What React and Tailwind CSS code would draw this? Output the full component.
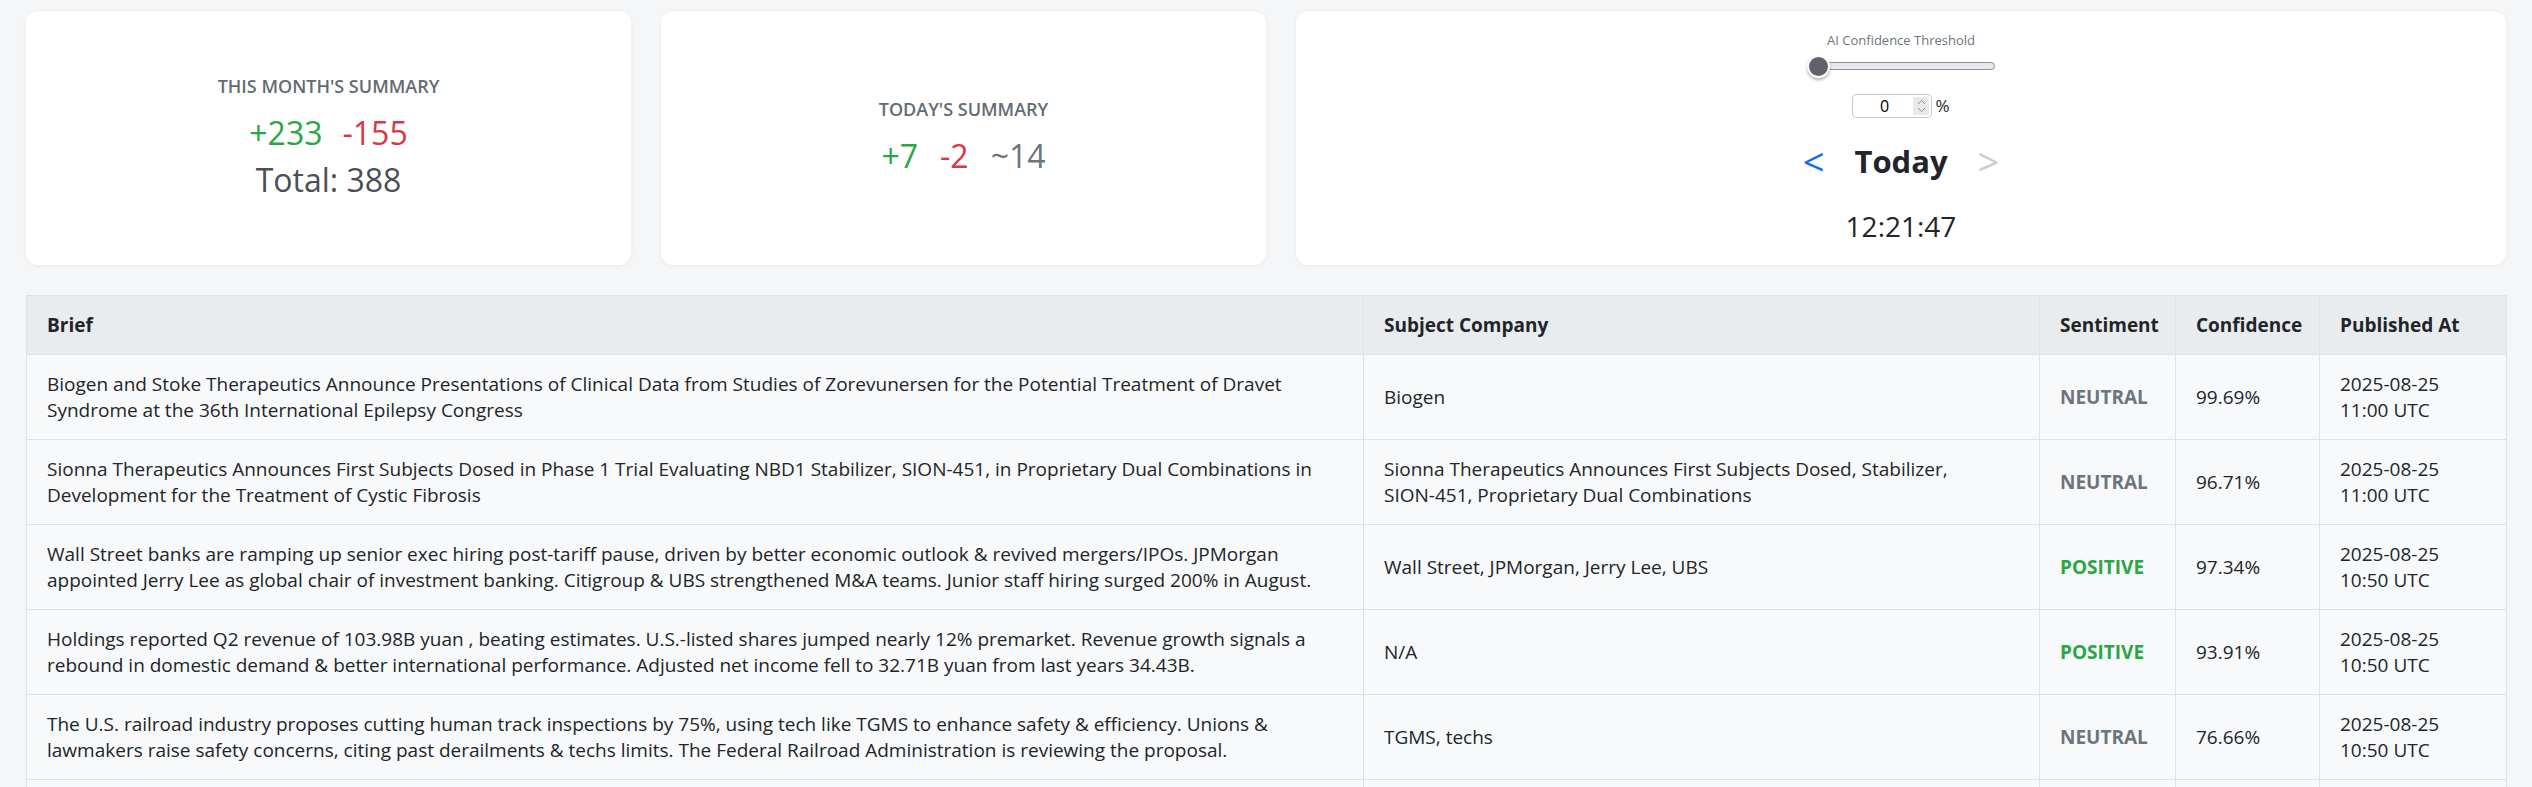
import React, { useState } from 'react';

const news = [
    {
        brief: 'Biogen and Stoke Therapeutics Announce Presentations of Clinical Data from Studies of Zorevunersen for the Potential Treatment of Dravet Syndrome at the 36th International Epilepsy Congress',
        company: 'Biogen',
        sentiment: 'NEUTRAL',
        confidence: '99.69%',
        date: '2025-08-25',
        time: '11:00 UTC'
    },
    {
        brief: 'Sionna Therapeutics Announces First Subjects Dosed in Phase 1 Trial Evaluating NBD1 Stabilizer, SION-451, in Proprietary Dual Combinations in Development for the Treatment of Cystic Fibrosis',
        company: (
            <>
                Sionna Therapeutics Announces First Subjects Dosed, Stabilizer,{' '}
                <span className="whitespace-nowrap">SION-451,</span> Proprietary Dual Combinations
            </>
        ),
        sentiment: 'NEUTRAL',
        confidence: '96.71%',
        date: '2025-08-25',
        time: '11:00 UTC'
    },
    {
        brief: 'Wall Street banks are ramping up senior exec hiring post-tariff pause, driven by better economic outlook & revived mergers/IPOs. JPMorgan appointed Jerry Lee as global chair of investment banking. Citigroup & UBS strengthened M&A teams. Junior staff hiring surged 200% in August.',
        company: 'Wall Street, JPMorgan, Jerry Lee, UBS',
        sentiment: 'POSITIVE',
        confidence: '97.34%',
        date: '2025-08-25',
        time: '10:50 UTC'
    },
    {
        brief: 'Holdings reported Q2 revenue of 103.98B yuan , beating estimates. U.S.-listed shares jumped nearly 12% premarket. Revenue growth signals a rebound in domestic demand & better international performance. Adjusted net income fell to 32.71B yuan from last years 34.43B.',
        company: 'N/A',
        sentiment: 'POSITIVE',
        confidence: '93.91%',
        date: '2025-08-25',
        time: '10:50 UTC'
    },
    {
        brief: 'The U.S. railroad industry proposes cutting human track inspections by 75%, using tech like TGMS to enhance safety & efficiency. Unions & lawmakers raise safety concerns, citing past derailments & techs limits. The Federal Railroad Administration is reviewing the proposal.',
        company: 'TGMS, techs',
        sentiment: 'NEUTRAL',
        confidence: '76.66%',
        date: '2025-08-25',
        time: '10:50 UTC'
    },
    {
        brief: 'Markets steady ahead of central bank commentary as investors weigh inflation data.',
        company: 'N/A',
        sentiment: 'NEUTRAL',
        confidence: '88.12%',
        date: '2025-08-25',
        time: '10:40 UTC'
    }
];

const SummaryCard = ({ title, children }) => (
    <div className="flex flex-col items-center justify-center rounded-xl bg-white shadow-[0_1px_4px_rgba(0,0,0,0.05)]">
        <div className="text-[18px] leading-[24px] font-semibold uppercase text-[#636b73]">{title}</div>
        <div className="mt-[11px] flex flex-col items-center">{children}</div>
    </div>
);

const Spinner = () => (
    <div className="flex h-full w-[16px] flex-col items-center justify-center bg-[#e9e9ed]">
        <svg width="9" height="6" viewBox="0 0 9 6" className="mb-[2px]">
            <path d="M1 5 L4.5 1.5 L8 5" fill="none" stroke="#8a8a8a" strokeWidth="1" />
        </svg>
        <svg width="9" height="6" viewBox="0 0 9 6">
            <path d="M1 1 L4.5 4.5 L8 1" fill="none" stroke="#8a8a8a" strokeWidth="1" />
        </svg>
    </div>
);

const App = () => {
    const [threshold] = useState(0);

    return (
        <div className="min-h-screen bg-[#f5f6f8] px-[26px] pt-[11px] font-['Open_Sans','Segoe_UI',sans-serif] text-[#212529]">
            <div className="grid h-[254px] grid-cols-[1fr_1fr_2fr] gap-[30px]">
                <SummaryCard title="This month's summary">
                    <div className="flex gap-[20px] text-[32px] leading-[47px]">
                        <span className="text-[#28a745]">+233</span>
                        <span className="text-[#dc3545]">-155</span>
                    </div>
                    <div className="text-[32px] leading-[47px] text-[#495057]">Total: 388</div>
                </SummaryCard>

                <SummaryCard title="Today's summary">
                    <div className="flex gap-[22px] text-[32px] leading-[47px]">
                        <span className="text-[#28a745]">+7</span>
                        <span className="text-[#dc3545]">-2</span>
                        <span className="text-[#6c757d]">~14</span>
                    </div>
                </SummaryCard>

                <div className="flex flex-col items-center justify-center rounded-xl bg-white shadow-[0_1px_4px_rgba(0,0,0,0.05)]">
                    <div className="text-[13px] leading-[18px] text-[#6c757d]">AI Confidence Threshold</div>
                    <div className="relative mt-[6px] flex h-[23px] w-[188px] items-center">
                        <div className="ml-[3px] h-[8px] w-full rounded-full border border-[#8f8f9d] bg-[#e9e9ed]" />
                        <div className="absolute left-0 top-0 h-[23px] w-[23px] rounded-full border-2 border-white bg-[#62626c] shadow-[0_2px_3px_rgba(0,0,0,0.3)]" />
                    </div>
                    <div className="mt-[15px] flex items-center gap-[3px]">
                        <div className="flex h-[24px] w-[80px] items-stretch overflow-hidden rounded-[4px] border border-[#c8c8c8] bg-white p-[2px]">
                            <div className="flex flex-1 items-center justify-center text-[16px] text-black">{threshold}</div>
                            <Spinner />
                        </div>
                        <span className="text-[17px]">%</span>
                    </div>
                    <div className="mt-[23px] flex items-center gap-[30px] leading-[40px]">
                        <span className="text-[38px] text-[#0d6efd]">&lt;</span>
                        <span className="text-[31px] font-bold">Today</span>
                        <span className="text-[38px] text-[#cccccc]">&gt;</span>
                    </div>
                    <div className="mt-[26px] text-[28px] leading-[38px]">12:21:47</div>
                </div>
            </div>

            <table className="mt-[30px] w-[2480px] table-fixed border-collapse border border-[#dee2e6] text-[19px] leading-[26px]">
                <colgroup>
                    <col className="w-[1337px]" />
                    <col className="w-[676px]" />
                    <col className="w-[136px]" />
                    <col className="w-[144px]" />
                    <col className="w-[187px]" />
                </colgroup>
                <thead>
                    <tr className="bg-[#e9ecef] text-left">
                        <th className="border border-[#dee2e6] px-[20px] py-[16px] font-bold">Brief</th>
                        <th className="border border-[#dee2e6] px-[20px] py-[16px] font-bold">Subject Company</th>
                        <th className="border border-[#dee2e6] px-[20px] py-[16px] font-bold">Sentiment</th>
                        <th className="border border-[#dee2e6] px-[20px] py-[16px] font-bold">Confidence</th>
                        <th className="border border-[#dee2e6] px-[20px] py-[16px] font-bold">Published At</th>
                    </tr>
                </thead>
                <tbody>
                    {news.map((item, i) => (
                        <tr key={i} className="bg-[#f8f9fa] align-middle">
                            <td className="border border-[#dee2e6] px-[20px] py-[16px]">{item.brief}</td>
                            <td className="border border-[#dee2e6] px-[20px] py-[16px]">{item.company}</td>
                            <td className={`border border-[#dee2e6] px-[20px] py-[16px] font-bold ${item.sentiment === 'POSITIVE' ? 'text-[#28a745]' : 'text-[#6c757d]'}`}>
                                {item.sentiment}
                            </td>
                            <td className="border border-[#dee2e6] px-[20px] py-[16px]">{item.confidence}</td>
                            <td className="border border-[#dee2e6] px-[20px] py-[16px]">
                                {item.date}
                                <br />
                                {item.time}
                            </td>
                        </tr>
                    ))}
                </tbody>
            </table>
        </div>
    );
};

export default App;
